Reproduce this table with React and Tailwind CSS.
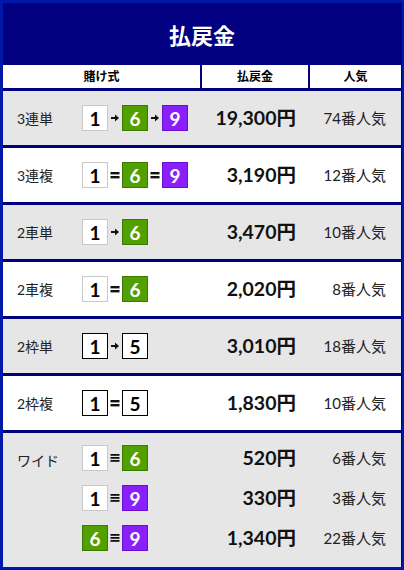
import React from "react";

const FONT = { fontFamily: "Lato, 'Noto Sans CJK JP', 'Noto Sans', sans-serif" };

const boxStyles = {
  w: "bg-white border-[#c8c8c8] text-black",
  g: "bg-[#52a000] border-[#3d7a00] text-white",
  p: "bg-[#8a1ffb] border-[#6a0fd0] text-white",
  f: "bg-white border-black text-black",
};

function Box({ n, c }) {
  return (
    <div
      className={`w-[26px] h-[26px] border flex items-center justify-center text-[19px] font-bold leading-none ${boxStyles[c]}`}
    >
      {n}
    </div>
  );
}

function Sep({ t }) {
  if (t === "arrow") {
    return (
      <svg width="14" height="10" viewBox="0 0 14 10">
        <path d="M3 5h5" stroke="#111" strokeWidth="2" />
        <path d="M7 1.5 11 5 7 8.5z" fill="#111" />
      </svg>
    );
  }
  const bars = t === "eq" ? [3, 7] : [2, 5, 8];
  return (
    <svg width="14" height="10" viewBox="0 0 14 10">
      {bars.map((y) => (
        <rect key={y} x="2.5" y={y - 1} width="9" height={t === "eq" ? 2.4 : 1.8} fill="#111" />
      ))}
    </svg>
  );
}

function Combo({ items }) {
  return (
    <div className="flex items-center">
      {items.map((it, i) =>
        typeof it === "string" ? <Sep key={i} t={it} /> : <Box key={i} n={it[0]} c={it[1]} />
      )}
    </div>
  );
}

const rows = [
  { label: "3連単", combo: [[1, "w"], "arrow", [6, "g"], "arrow", [9, "p"]], pay: "19,300円", pop: "74番人気", bg: "bg-[#e6e6e6]" },
  { label: "3連複", combo: [[1, "w"], "eq", [6, "g"], "eq", [9, "p"]], pay: "3,190円", pop: "12番人気", bg: "bg-white" },
  { label: "2車単", combo: [[1, "w"], "arrow", [6, "g"]], pay: "3,470円", pop: "10番人気", bg: "bg-[#e6e6e6]" },
  { label: "2車複", combo: [[1, "w"], "eq", [6, "g"]], pay: "2,020円", pop: "8番人気", bg: "bg-white" },
  { label: "2枠単", combo: [[1, "f"], "arrow", [5, "f"]], pay: "3,010円", pop: "18番人気", bg: "bg-[#e6e6e6]" },
  { label: "2枠複", combo: [[1, "f"], "eq", [5, "f"]], pay: "1,830円", pop: "10番人気", bg: "bg-white" },
];

const wide = [
  { combo: [[1, "w"], "tri", [6, "g"]], pay: "520円", pop: "6番人気" },
  { combo: [[1, "w"], "tri", [9, "p"]], pay: "330円", pop: "3番人気" },
  { combo: [[6, "g"], "tri", [9, "p"]], pay: "1,340円", pop: "22番人気" },
];

function Line({ combo, pay, pop }) {
  return (
    <div className="flex items-center h-[30px]">
      <div className="w-[120px]">
        <Combo items={combo} />
      </div>
      <div className="w-[108px] text-right pr-[14px] text-[19.5px] font-bold text-[#111]">{pay}</div>
      <div className="w-[91px] text-right pr-[15px] text-[15px] text-[#222]">{pop}</div>
    </div>
  );
}

export default function App() {
  return (
    <div style={FONT} className="w-[404px] h-[570px] bg-[#0019a8] pt-[3px] pl-[3px] pr-[3px] pb-[3px] flex">
      <div className="flex-1 bg-[#000080] flex flex-col gap-[3px] pr-[1px]">
        <div>
          <div className="h-[60px] flex items-center justify-center pt-[5px] text-white text-[22px] font-bold">
            払戻金
          </div>
          <div className="flex gap-[2px] mt-[2px] h-[23px] text-[12px] font-bold text-black">
            <div className="w-[197px] bg-white flex items-center justify-center">賭け式</div>
            <div className="w-[106px] bg-white flex items-center justify-center">払戻金</div>
            <div className="flex-1 bg-white flex items-center justify-center">人気</div>
          </div>
        </div>

        {rows.map((r) => (
          <div key={r.label} className={`h-[54px] flex items-center ${r.bg}`}>
            <div className="w-[79px] pl-[14px] text-[14px] text-[#222]">{r.label}</div>
            <Line combo={r.combo} pay={r.pay} pop={r.pop} />
          </div>
        ))}

        <div className="flex-1 bg-[#e6e6e6] flex pt-[10px]">
          <div className="w-[79px] pl-[14px] h-[30px] flex items-center pt-[4px] text-[14px] text-[#222]">
            ワイド
          </div>
          <div className="flex flex-col gap-[10px]">
            {wide.map((w, i) => (
              <Line key={i} combo={w.combo} pay={w.pay} pop={w.pop} />
            ))}
          </div>
        </div>
      </div>
    </div>
  );
}
